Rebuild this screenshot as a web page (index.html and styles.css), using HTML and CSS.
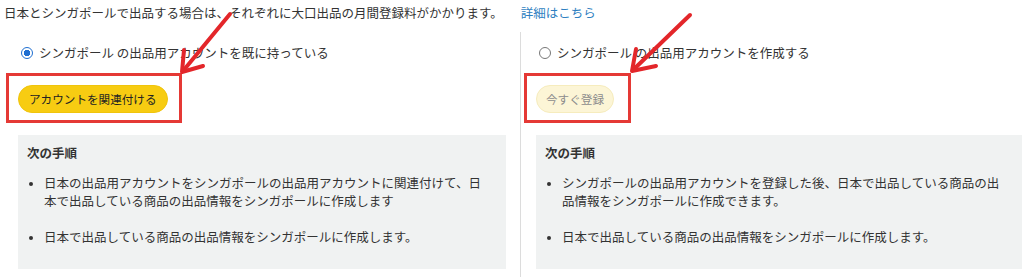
FILE: index.html
```html
<!DOCTYPE html>
<html lang="ja">
<head>
    <meta charset="UTF-8">
    <meta name="viewport" content="width=device-width, initial-scale=1.0">
    <title>シンガポールの出品用アカウント</title>
    <link rel="stylesheet" href="styles.css">
</head>
<body>
    <div class="page">
        <p class="notice">日本とシンガポールで出品する場合は、それぞれに大口出品の月間登録料がかかります。<a class="more" href="#">詳細はこちら</a></p>

        <div class="options">
            <section class="option">
                <label class="choice"><span class="radio checked"></span>シンガポール の出品用アカウントを既に持っている</label>
                <button class="btn btn-primary">アカウントを関連付ける</button>
                <div class="steps">
                    <div class="steps-title">次の手順</div>
                    <ul>
                        <li>日本の出品用アカウントをシンガポールの出品用アカウントに関連付けて、日本で出品している商品の出品情報をシンガポールに作成します</li>
                        <li>日本で出品している商品の出品情報をシンガポールに作成します。</li>
                    </ul>
                </div>
            </section>
            <section class="option option-right">
                <label class="choice"><span class="radio"></span>シンガポール の出品用アカウントを作成する</label>
                <button class="btn btn-disabled">今すぐ登録</button>
                <div class="steps">
                    <div class="steps-title">次の手順</div>
                    <ul>
                        <li>シンガポールの出品用アカウントを登録した後、日本で出品している商品の出品情報をシンガポールに作成できます。</li>
                        <li>日本で出品している商品の出品情報をシンガポールに作成します。</li>
                    </ul>
                </div>
            </section>
        </div>

        <!-- 注釈 -->
        <div class="mark mark-left"></div>
        <div class="mark mark-right"></div>
        <svg class="arrows" width="1024" height="277" viewBox="0 0 1024 277">
            <g stroke="#e3262a" stroke-width="4" stroke-linecap="round" stroke-linejoin="round" fill="none">
                <line x1="230" y1="14" x2="183" y2="71"/>
                <polyline points="184,50 182,72 203,66"/>
                <line x1="690" y1="15" x2="633" y2="70"/>
                <polyline points="636,49 632,71 656,66"/>
            </g>
        </svg>
    </div>
</body>
</html>
```

FILE: styles.css
```css
body, html {
    margin: 0;
    background-color: #fff;
    font-family: "Noto Sans CJK JP", "Noto Sans", sans-serif;
    color: #333;
    font-size: 12.5px;
}
.page {
    position: relative;
    width: 1024px;
    height: 277px;
    overflow: hidden;
}
.notice {
    margin: 0;
    padding: 4px 0 0 4px;
    line-height: 18px;
    white-space: nowrap;
}
.more {
    margin-left: 18px;
    color: #2f7fc1;
    text-decoration: none;
}
.options {
    display: flex;
    margin-top: 10px;
    padding-left: 4px;
}
.option {
    width: 488px;
    padding: 12px 14px 0 14px;
    height: 238px;
}
.option-right {
    width: 486px;
    border-left: 1px solid #dcdcdc;
    padding: 12px 2px 0 15px;
}
.choice {
    display: flex;
    align-items: center;
    gap: 6px;
    line-height: 18px;
    white-space: nowrap;
}
.radio {
    width: 12px;
    height: 12px;
    margin-left: 3px;
    box-sizing: border-box;
    border: 1px solid #777;
    border-radius: 50%;
    background: #fff;
}
.radio.checked {
    border-color: #1f6fd1;
    background: radial-gradient(circle, #1f6fd1 0 3px, #fff 3.5px);
}
.btn {
    display: block;
    height: 28px;
    margin-top: 23px;
    padding: 0 10px;
    border-radius: 14px;
    font-family: inherit;
    font-size: 11.6px;
    line-height: 26px;
    cursor: pointer;
}
.btn-primary {
    background-color: #f7cc12;
    border: 1px solid #f0c40c;
    color: #222;
}
.btn-disabled {
    padding: 0 9px;
    background-color: #fcf5d6;
    border: 1px solid #f6ecbd;
    color: #8c8c8c;
    cursor: default;
}
.steps {
    margin-top: 22px;
    background-color: #f0f2f2;
    padding: 9px 14px 23px 9px;
}
.steps-title {
    font-weight: bold;
    line-height: 17px;
}
.steps ul {
    margin: 13px 0 0 0;
    padding-left: 17px;
}
.steps li {
    line-height: 17.5px;
}
.steps li + li {
    margin-top: 19px;
}
.steps li::marker {
    font-size: 10px;
}
.mark {
    position: absolute;
    top: 73px;
    height: 50px;
    box-sizing: border-box;
    border: 3px solid #e53935;
}
.mark-left {
    left: 6px;
    width: 176px;
}
.mark-right {
    left: 524px;
    width: 107px;
}
.arrows {
    position: absolute;
    top: 0;
    left: 0;
}
```
